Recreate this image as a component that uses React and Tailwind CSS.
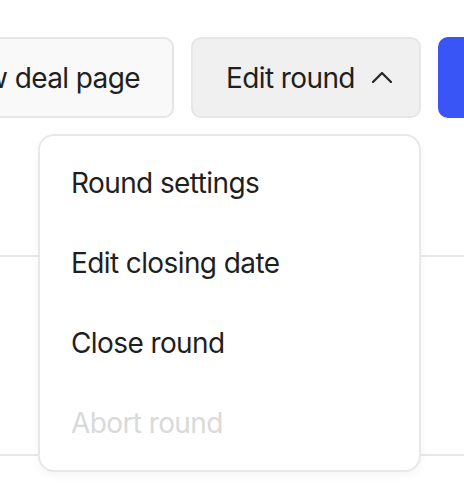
import { useState } from 'react';

const items = [
  { label: 'Round settings' },
  { label: 'Edit closing date' },
  { label: 'Close round' },
  { label: 'Abort round', disabled: true },
];

function ChevronUp() {
  return (
    <svg width="20" height="11" viewBox="0 0 20 11" fill="none" className="shrink-0">
      <path d="M1 10 L10 1 L19 10" stroke="#262626" strokeWidth="2.2" strokeLinecap="square" strokeLinejoin="miter" />
    </svg>
  );
}

export default function App() {
  const [open, setOpen] = useState(true);

  return (
    <div
      className="relative w-full h-[500px] overflow-hidden bg-white text-[#1f1f1f] tracking-[-0.6px]"
      style={{ fontFamily: 'Inter, "Noto Sans", sans-serif' }}
    >
      <div className="flex items-start gap-[17px] pt-[37px]">
        <div className="w-[174px] shrink-0 flex justify-end">
          <button className="shrink-0 h-[81px] px-[32px] rounded-[10px] border-2 border-[#e6e6e6] bg-[#f9f9f9] text-[28px] whitespace-nowrap">
            View deal page
          </button>
        </div>

        <div className="relative shrink-0">
          <button
            onClick={() => setOpen(!open)}
            className="w-[230px] h-[81px] pl-[33px] rounded-[10px] border-2 border-[#e6e6e6] bg-[#f0f0f0] text-[28px] flex items-center whitespace-nowrap"
          >
            <span>Edit round</span>
            <span className="ml-[17px] flex items-center">
              <ChevronUp />
            </span>
          </button>

          {open && (
            <div className="absolute right-0 top-full mt-[16px] w-[383px] z-10 rounded-[16px] border-2 border-[#e8e8e8] bg-white py-[7px] shadow-[0_4px_10px_rgba(0,0,0,0.04)]">
              {items.map(item => (
                <div
                  key={item.label}
                  className={`h-[80px] flex items-center px-[31px] text-[28px] ${item.disabled ? 'text-[#d9d9d9]' : 'text-[#1f1f1f]'}`}
                >
                  {item.label}
                </div>
              ))}
            </div>
          )}
        </div>

        <button className="shrink-0 w-[200px] h-[81px] rounded-[10px] bg-[#3a55f6] text-white text-[28px]">
          Invite
        </button>
      </div>

      <div className="h-[139px] border-b-2 border-[#e8e8e8]" />
      <div className="h-[199px] border-b-2 border-[#e8e8e8]" />
    </div>
  );
}
